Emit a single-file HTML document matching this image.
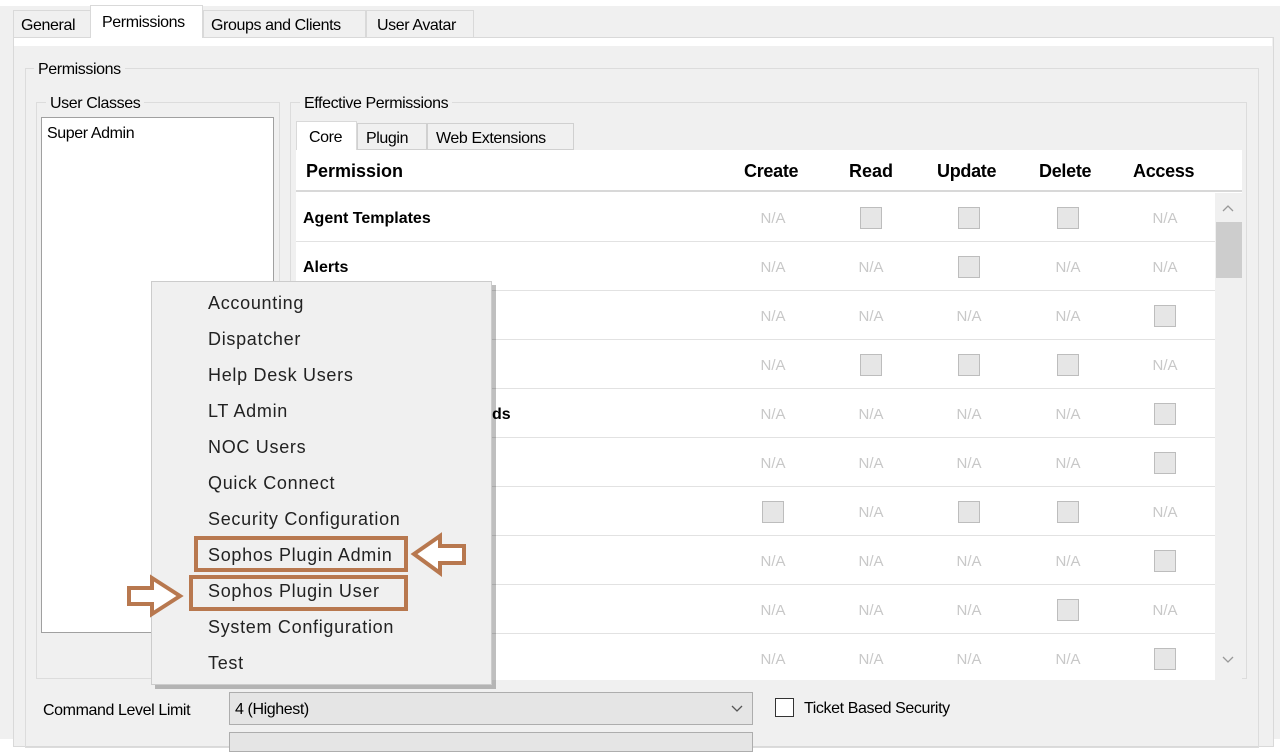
<!DOCTYPE html>
<html><head><style>
body{margin:0;width:1280px;height:739px;background:#fff;position:relative;overflow:hidden;font-family:"Liberation Sans",sans-serif;color:#000}
div{box-sizing:border-box}
.a{position:absolute}
.t{font-size:16px;letter-spacing:-0.4px}
.na{position:absolute;color:#c8c8c8;font-size:15px;width:50px;text-align:center;margin-left:-25px}
.cb{position:absolute;width:22px;height:22px;margin-left:-11px;background:#e6e6e6;border:1px solid #bdbdbd}
.hl{position:absolute;height:1px;left:296px;width:919px;background:#e2e2e2}
.mi{position:absolute;left:208px;font-size:18px;color:#222;letter-spacing:0.7px}
</style></head><body>
<div class="a" style="left:0;top:0;width:1280px;height:739px;background:#f0f0f0"></div>
<div class="a" style="left:0;top:0;width:1280px;height:6px;background:#fff"></div>
<div class="a" style="left:13px;top:37px;width:1261px;height:710px;border:1px solid #d9d9d9;background:#f0f0f0"></div>
<div class="a t" style="left:13px;top:10px;width:78px;height:28px;border:1px solid #d9d9d9;background:#f0f0f0;padding:6px 0 0 7px">General</div>
<div class="a t" style="left:90px;top:5px;width:113px;height:34px;border:1px solid #d9d9d9;border-bottom:none;background:#fff;padding:8px 0 0 11px">Permissions</div>
<div class="a t" style="left:203px;top:10px;width:163px;height:28px;border:1px solid #d9d9d9;background:#f0f0f0;padding:6px 0 0 7px">Groups and Clients</div>
<div class="a t" style="left:366px;top:10px;width:108px;height:28px;border:1px solid #d9d9d9;background:#f0f0f0;padding:6px 0 0 10px">User Avatar</div>
<div class="a" style="left:14px;top:38px;width:1258px;height:8px;background:#fff"></div>
<div class="a" style="left:25px;top:68px;width:1234px;height:680px;border:1px solid #dcdcdc"></div>
<div class="a t" style="left:34px;top:61px;background:#f0f0f0;padding:0 4px">Permissions</div>
<div class="a" style="left:36px;top:102px;width:244px;height:577px;border:1px solid #dcdcdc"></div>
<div class="a t" style="left:46px;top:95px;background:#f0f0f0;padding:0 4px">User Classes</div>
<div class="a" style="left:41px;top:117px;width:233px;height:516px;border:1px solid #a0a0a0;background:#fff"></div>
<div class="a t" style="left:47px;top:125px">Super Admin</div>
<div class="a" style="left:290px;top:102px;width:957px;height:577px;border:1px solid #dcdcdc"></div>
<div class="a t" style="left:300px;top:95px;background:#f0f0f0;padding:0 4px">Effective Permissions</div>
<div class="a t" style="left:296px;top:121px;width:61px;height:30px;border:1px solid #d9d9d9;border-bottom:none;background:#fff;padding:7px 0 0 12px">Core</div>
<div class="a t" style="left:357px;top:123px;width:70px;height:27px;border:1px solid #d0d0d0;padding:6px 0 0 8px">Plugin</div>
<div class="a t" style="left:427px;top:123px;width:147px;height:27px;border:1px solid #d0d0d0;padding:6px 0 0 8px">Web Extensions</div>
<div class="a" style="left:296px;top:150px;width:946px;height:530px;background:#fff"></div>
<div class="a" style="left:296px;top:190px;width:946px;height:2px;background:#d8d8d8"></div>
<div class="a" style="left:306px;top:161px;font-weight:bold;font-size:18px">Permission</div>
<div class="a" style="left:744px;top:161px;font-weight:bold;font-size:18px;letter-spacing:-0.3px">Create</div>
<div class="a" style="left:849px;top:161px;font-weight:bold;font-size:18px">Read</div>
<div class="a" style="left:937px;top:161px;font-weight:bold;font-size:18px;letter-spacing:-0.3px">Update</div>
<div class="a" style="left:1039px;top:161px;font-weight:bold;font-size:18px;letter-spacing:-0.3px">Delete</div>
<div class="a" style="left:1133px;top:161px;font-weight:bold;font-size:18px;letter-spacing:-0.3px">Access</div>
<div class="a" style="left:303px;top:210px;font-weight:bold;font-size:16px">Agent Templates</div>
<div class="a" style="left:303px;top:259px;font-weight:bold;font-size:16px">Alerts</div>
<div class="a" style="left:492px;top:406px;font-weight:bold;font-size:16px">ds</div>
<div class="hl" style="top:241px"></div><div class="hl" style="top:290px"></div><div class="hl" style="top:339px"></div><div class="hl" style="top:388px"></div><div class="hl" style="top:437px"></div><div class="hl" style="top:486px"></div><div class="hl" style="top:535px"></div><div class="hl" style="top:584px"></div><div class="hl" style="top:633px"></div>
<div class="a" style="left:1215px;top:193px;width:27px;height:487px;background:#f0f0f0"></div>
<div class="a" style="left:1216px;top:222px;width:26px;height:56px;background:#cdcdcd"></div>
<svg class="a" style="left:1215px;top:193px" width="27" height="487"><path d="M8 18 L13 13 L18 18" fill="none" stroke="#999" stroke-width="1.3"/><path d="M8 464 L13 469 L18 464" fill="none" stroke="#999" stroke-width="1.3"/></svg>
<div id="cells"></div>
<script>
var p=[["n","c","c","c","n"],["n","n","c","n","n"],["n","n","n","n","c"],["n","c","c","c","n"],["n","n","n","n","c"],["n","n","n","n","c"],["c","n","c","c","n"],["n","n","n","n","c"],["n","n","n","c","n"],["n","n","n","n","c"]];
var xs=[773,871,969,1068,1165],h="";
p.forEach(function(r,i){var y=218+49*i;r.forEach(function(v,j){if(v=="n")h+='<div class="na" style="left:'+xs[j]+'px;top:'+(y-8)+'px">N/A</div>';else h+='<div class="cb" style="left:'+xs[j]+'px;top:'+(y-11)+'px"></div>';});});
document.getElementById("cells").innerHTML=h;
</script>
<div class="a t" style="left:43px;top:702px">Command Level Limit</div>
<div class="a t" style="left:229px;top:692px;width:524px;height:33px;border:1px solid #adadad;background:#e5e5e5;padding:8px 0 0 5px">4 (Highest)</div>
<svg class="a" style="left:730px;top:704px" width="14" height="10"><path d="M2 2 L7 7 L12 2" fill="none" stroke="#555" stroke-width="1.3"/></svg>
<div class="a" style="left:229px;top:732px;width:524px;height:20px;border:1px solid #adadad;background:#e5e5e5"></div>
<div class="a" style="left:775px;top:698px;width:19px;height:19px;border:1px solid #333;background:#fff"></div>
<div class="a t" style="left:804px;top:700px">Ticket Based Security</div>
<div class="a" style="left:155px;top:285px;width:341px;height:404px;background:rgba(0,0,0,0.25)"></div>
<div class="a" style="left:151px;top:281px;width:341px;height:404px;border:1px solid #ccc;background:#f0f0f0"></div>
<div class="mi" style="top:293px">Accounting</div>
<div class="mi" style="top:329px">Dispatcher</div>
<div class="mi" style="top:365px">Help Desk Users</div>
<div class="mi" style="top:401px">LT Admin</div>
<div class="mi" style="top:437px">NOC Users</div>
<div class="mi" style="top:473px">Quick Connect</div>
<div class="mi" style="top:509px">Security Configuration</div>
<div class="mi" style="top:545px">Sophos Plugin Admin</div>
<div class="mi" style="top:581px">Sophos Plugin User</div>
<div class="mi" style="top:617px">System Configuration</div>
<div class="mi" style="top:653px">Test</div>
<div class="a" style="left:194px;top:536px;width:214px;height:36px;border:4px solid #b8784f"></div>
<div class="a" style="left:189px;top:575px;width:219px;height:36px;border:4px solid #b8784f"></div>
<svg class="a" style="left:0;top:0" width="1280" height="739">
<path d="M464 546 L440 546 L440 536 L414 554 L440 573 L440 563 L464 563 Z" fill="#fff" stroke="#b8784f" stroke-width="4"/>
<path d="M129 588 L152 588 L152 578 L180 596 L152 614 L152 604 L129 604 Z" fill="#fff" stroke="#b8784f" stroke-width="4"/>
</svg>
</body></html>
